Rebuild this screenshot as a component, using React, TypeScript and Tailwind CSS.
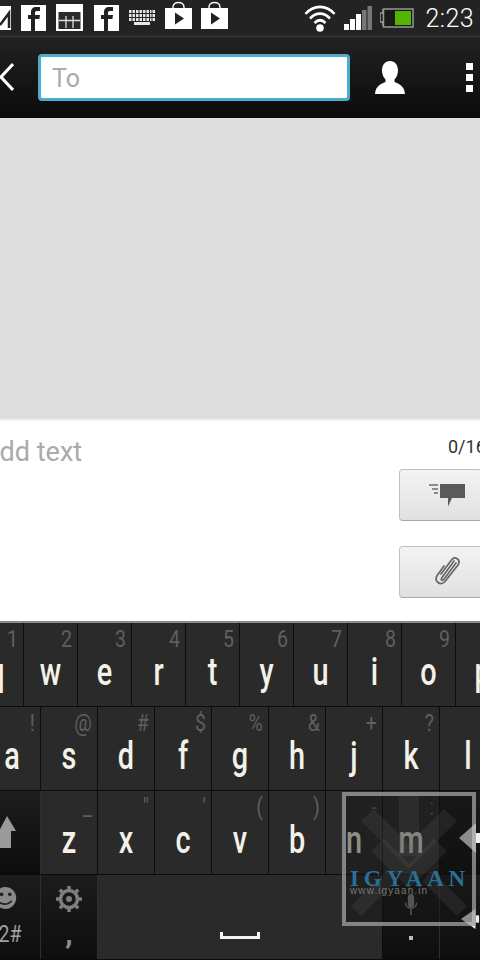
import type { ReactNode } from 'react'

const font = 'font-[Roboto,"Liberation_Sans",sans-serif]'

const row1 = [
  ['q', '1'], ['w', '2'], ['e', '3'], ['r', '4'], ['t', '5'],
  ['y', '6'], ['u', '7'], ['i', '8'], ['o', '9'], ['p', '0'],
]
const row2 = [
  ['a', '!'], ['s', '@'], ['d', '#'], ['f', '$'], ['g', '%'],
  ['h', '&'], ['j', '+'], ['k', '?'], ['l', '/'],
]
const row3 = [
  ['z', '_'], ['x', '"'], ['c', "'"], ['v', '('], ['b', ')'], ['n', '-'], ['m', ':'],
]

function FbIcon() {
  return (
    <svg width="25" height="26" viewBox="0 0 25 26" className="shrink-0">
      <rect width="25" height="26" fill="#fff" />
      <path d="M10 26V14H7v-4h3V7c0-3 2-5 5-5h4v4h-3c-1 0-2 .5-2 2v2h5l-.6 4H14v12z" fill="#222" />
    </svg>
  )
}

function PlayBag() {
  return (
    <svg width="27" height="28" viewBox="0 0 27 28" className="shrink-0">
      <path d="M8 8V6c0-6 11-6 11 0v2" fill="none" stroke="#fff" strokeWidth="1.4" />
      <rect y="7" width="27" height="21" fill="#fff" />
      <path d="M10 11.5l9 6-9 6z" fill="#222" />
    </svg>
  )
}

function StatusBar() {
  return (
    <div className="h-[37px] bg-[#232323] border-b border-[#3a3a3a] flex items-center relative shrink-0">
      <div className="flex items-center h-full w-[240px] -ml-[13px] pb-[1px]">
        <svg width="24" height="24" viewBox="0 0 24 24" className="shrink-0 mr-[10px]">
          <rect width="24" height="24" fill="#fff" />
          <path d="M13 19L22 7v15" fill="none" stroke="#222" strokeWidth="2.500" />
        </svg>
        <FbIcon />
        <svg width="27" height="27" viewBox="0 0 27 27" className="shrink-0 ml-[10px]">
          <rect width="27" height="27" fill="#fff" />
          <rect x="2.5" y="8" width="22" height="17" fill="#2a2a2a" />
          <path d="M3 16.500h21M10 12v12M17 12v12" stroke="#ddd" strokeWidth="1.300" />
        </svg>
        <div className="ml-[11px]"><FbIcon /></div>
        <svg width="26" height="15" viewBox="0 0 26 15" className="shrink-0 ml-[10px]">
          <g fill="#e6e6e6">
            <rect width="26" height="3" />
            <rect y="4" width="26" height="3" />
            <rect y="8" width="26" height="3" />
            <rect x="5" y="12" width="16" height="3" />
          </g>
          <path d="M3 0v11M6.500 0v11M10 0v11M13.500 0v11M17 0v11M20.500 0v11M23 0v11" stroke="#232323" strokeWidth="1" />
        </svg>
        <div className="ml-[10px] -mt-[5px]"><PlayBag /></div>
        <div className="ml-[9px] -mt-[5px]"><PlayBag /></div>
      </div>
      <div className="ml-auto flex items-center h-full -mr-[20px] shrink-0">
        <svg width="32" height="28" viewBox="0 0 32 28" className="shrink-0">
          <g fill="none" stroke="#fff" strokeWidth="2.600">
            <path d="M1.500 10c8-9.500 21-9.500 29 0" />
            <path d="M6 14.500c6-6.500 14-6.500 20 0" />
            <path d="M10.500 19c3.500-3.500 7.500-3.500 11 0" />
          </g>
          <circle cx="16" cy="24" r="3.800" fill="#fff" />
        </svg>
        <svg width="28" height="24" viewBox="0 0 28 24" className="shrink-0 ml-[8px]">
          <rect x="0" y="18" width="5" height="6" fill="#fff" />
          <rect x="6" y="13" width="5" height="11" fill="#fff" />
          <rect x="12" y="8" width="5" height="16" fill="#fff" />
          <rect x="18" y="4" width="4.500" height="20" fill="#777" />
          <rect x="23.500" y="0" width="4.500" height="24" fill="#777" />
        </svg>
        <svg width="34" height="20" viewBox="0 0 34 20" className="shrink-0 ml-[8px]">
          <path d="M0 5h3V2h1M0 5v9h3v4" fill="none" stroke="#999" strokeWidth="1.500" />
          <rect x="3.500" y="1" width="29.500" height="18" fill="#1a1a1a" stroke="#999" strokeWidth="1.500" />
          <rect x="15" y="3" width="16" height="14" fill="#54b500" />
        </svg>
        <span className={`${font} text-[25px] font-light text-white ml-[12px] leading-none tracking-[0.4px]`}>2:23</span>
        <span className={`${font} text-[14px] text-white ml-[6px] w-[20px] leading-none mt-[5px]`}>PM</span>
      </div>
    </div>
  )
}

function ActionBar() {
  return (
    <div className="h-[81px] bg-gradient-to-b from-[#222222] to-[#0b0b0b] flex items-center shrink-0">
      <svg width="14" height="30" viewBox="0 0 14 30" className="shrink-0 -mt-[1px]">
        <path d="M13 2L1 15l12 13" fill="none" stroke="#fff" strokeWidth="3" />
      </svg>
      <div className="ml-[24px] w-[312px] h-[47px] bg-white border-[3px] border-[#4dabcc] rounded-[4px] flex items-center pl-[11px] pt-[2px] -mt-[1px] shrink-0">
        <span className={`${font} text-[25px] text-[#aaaaaa] leading-none`}>To</span>
      </div>
      <svg width="30" height="33" viewBox="0 0 30 33" className="shrink-0 ml-[25px]">
        <path d="M15 0c5 0 8 4 8 9.500 0 4-1.500 7-3.500 9v2.500c3 1.500 10 3 10.500 12H0c.5-9 7.500-10.500 10.500-12v-2.500C8.500 16.500 7 13.500 7 9.500 7 4 10 0 15 0z" fill="#fff" />
      </svg>
      <div className="ml-[61px] flex flex-col gap-[4px] shrink-0">
        <div className="w-[7px] h-[7px] bg-white" />
        <div className="w-[7px] h-[7px] bg-white" />
        <div className="w-[7px] h-[7px] bg-white" />
      </div>
    </div>
  )
}

function Compose() {
  return (
    <div className="h-[200px] bg-white flex shrink-0 relative">
      <span className={`${font} text-[27px] text-[#aaaaaa] leading-none -ml-[18px] mt-[18px] whitespace-nowrap`}>Add text</span>
      <div className="ml-auto w-[82px] -mr-[1px] flex flex-col shrink-0">
        <span className={`${font} text-[18px] text-[#333333] leading-none mt-[17px] ml-[49px] whitespace-nowrap`}>0/160</span>
        <button className="mt-[13px] h-[52px] w-[83px] rounded-[4px] border border-[#c0c0c0] border-b-[#a8a8a8] bg-gradient-to-b from-[#f3f3f3] to-[#e1e1e1] flex items-center justify-center pl-[14px]">
          <svg width="37" height="23" viewBox="0 0 37 23">
            <path d="M11 0h25v14H23l-4 8.500V14h-8z" fill="#5a5a5a" />
            <path d="M0 1h9M3 5h6M5 9h4" stroke="#6a6a6a" strokeWidth="1.500" />
          </svg>
        </button>
        <button className="mt-[25px] h-[52px] w-[83px] rounded-[4px] border border-[#c0c0c0] border-b-[#a8a8a8] bg-gradient-to-b from-[#f3f3f3] to-[#e1e1e1] flex items-center justify-center pl-[14px]">
          <svg width="28" height="30" viewBox="0 0 28 30">
            <g fill="none" stroke="#666" strokeWidth="1.700" strokeLinecap="round">
              <path d="M10 9L3.500 18c-2 3-1.500 6 .5 7.500s5 1.500 7-1L24 8c1.500-2.500 1.500-4.500-.5-6s-4.500-1-6 1L7 17" />
              <path d="M20 4L8 20.500c-1 1.500-1 2-.3 2.500s1.500.3 2.500-1L22 6" />
            </g>
          </svg>
        </button>
      </div>
    </div>
  )
}

function Key({ letter, hint, width, dark }: { letter?: ReactNode; hint?: string; width: string; dark?: boolean }) {
  return (
    <div className={`${width} h-full shrink-0 border-r border-[#0c0c0c] flex flex-col ${dark ? 'bg-gradient-to-b from-[#1c1c1c] to-[#0e0e0e]' : 'bg-[#2a2a2a]'}`}>
      {hint ? (
        <span className={`${font} text-[23px] leading-[24px] text-[#5f5f5f] text-right pr-[6px] mt-[5px] h-[24px] origin-right scale-x-[0.85]`}>{hint}</span>
      ) : (
        <span className="h-[24px] mt-[5px]" />
      )}
      <span className={`${font} text-[39px] font-medium leading-[40px] text-[#f3f1e8] text-center scale-x-[0.74]`}>{letter}</span>
    </div>
  )
}

function Keyboard() {
  return (
    <div className="flex-1 bg-[#0c0c0c] border-t-[2px] border-[#8a8a8a] relative overflow-hidden">
      <div className="flex h-[84px] -ml-[30px] border-b-[1px] border-[#0c0c0c]">
        {row1.map(([l, h]) => <Key key={l} letter={l} hint={h} width="w-[54px]" />)}
      </div>
      <div className="flex h-[84px] -ml-[16px] border-b-[1px] border-[#0c0c0c]">
        {row2.map(([l, h]) => <Key key={l} letter={l} hint={h} width="w-[57px]" />)}
      </div>
      <div className="flex h-[84px] border-b-[1px] border-[#0c0c0c]">
        <div className="w-[41px] shrink-0 h-full border-r border-[#2f2f2f] bg-gradient-to-b from-[#1e1e1e] to-[#0c0c0c] flex items-center">
          <svg width="16" height="32" viewBox="0 0 16 32" className="-mt-[2px]">
            <path d="M-1 15L7 0l9 15h-5v17H0V15z" fill="#9a9a9a" />
          </svg>
        </div>
        {row3.map(([l, h]) => <Key key={l} letter={l} hint={h} width="w-[57px]" />)}
        <div className="flex-1 h-full bg-gradient-to-b from-[#1c1c1c] to-[#0e0e0e] flex items-center pl-[19px]">
          <svg width="22" height="30" viewBox="0 0 22 30" className="shrink-0 mt-[10px]">
            <path d="M0 15L17 0v30z" fill="#eeeeee" />
            <rect x="17" y="10" width="5" height="10" fill="#eeeeee" />
          </svg>
        </div>
      </div>
      <div className="flex h-[84px]">
        <div className="w-[41px] shrink-0 h-full border-r border-[#2f2f2f] bg-gradient-to-b from-[#1c1c1c] to-[#0e0e0e] flex flex-col">
          <svg width="20" height="24" viewBox="0 0 22 24" className="mt-[11px] -ml-[2px]">
            <circle cx="8" cy="12" r="12" fill="#8a8a8a" />
            <circle cx="4" cy="8" r="2" fill="#222" />
            <circle cx="13" cy="8" r="2" fill="#222" />
            <path d="M0 15c3 5 11 5 15 0" fill="none" stroke="#222" strokeWidth="1.800" />
          </svg>
          <span className={`${font} text-[23px] leading-none text-[#a0a0a0] mt-[13px] -ml-[35px] w-[70px] text-center scale-x-[0.85] whitespace-nowrap`}>?12#</span>
        </div>
        <div className="w-[57px] shrink-0 h-full border-r border-[#2f2f2f] bg-gradient-to-b from-[#1c1c1c] to-[#0e0e0e] flex flex-col items-center">
          <svg width="26" height="26" viewBox="0 0 26 26" className="mt-[11px]">
            <circle cx="13" cy="13" r="8.500" fill="none" stroke="#7e7e7e" strokeWidth="3.500" />
            <circle cx="13" cy="13" r="3" fill="#7e7e7e" />
            <path d="M13 0v5M13 21v5M0 13h5M21 13h5M3.800 3.800l3.500 3.500M18.700 18.700l3.500 3.500M22.200 3.800l-3.500 3.500M7.300 18.700l-3.500 3.500" stroke="#7e7e7e" strokeWidth="3.500" />
          </svg>
          <span className={`${font} text-[30px] font-bold leading-none text-[#8f8f8f] mt-[7px]`}>,</span>
        </div>
        <div className="w-[285px] shrink-0 h-full border-r border-[#0c0c0c] bg-[#2a2a2a] flex items-start justify-center pt-[57px]">
          <div className="w-[40px] h-[7px] border-[3px] border-t-0 border-[#f3f3f3]" />
        </div>
        <div className="w-[57px] shrink-0 h-full border-r border-[#2f2f2f] bg-gradient-to-b from-[#1c1c1c] to-[#0e0e0e] flex flex-col items-center">
          <svg width="18" height="22" viewBox="0 0 18 28" className="mt-[19px]">
            <rect x="5" y="0" width="8" height="17" rx="4" fill="#8a8a8a" />
            <path d="M2 11c0 9 14 9 14 0M9 18v9" fill="none" stroke="#8a8a8a" strokeWidth="2" />
          </svg>
          <div className="w-[4px] h-[4px] bg-[#bbbbbb] mt-[20px]" />
        </div>
        <div className="flex-1 h-full bg-gradient-to-b from-[#1c1c1c] to-[#0e0e0e] flex items-start pl-[20px] pt-[34px]">
          <svg width="20" height="20" viewBox="0 0 20 22" className="shrink-0">
            <path d="M0 11L16 0v22z" fill="#eeeeee" />
            <rect x="16" y="7" width="4" height="8" fill="#eeeeee" />
          </svg>
        </div>
      </div>

      {/* Watermark over the keys */}
      <div className="absolute left-[342px] top-[169px] w-[134px] h-[134px] border-[4px] border-[#c8c8c8]/60 bg-[#141414]/45 overflow-hidden">
        <svg width="126" height="126" viewBox="0 0 126 126" className="absolute left-0 top-0">
          <g fill="#666" fillOpacity="0.18">
            <path d="M15 25l13-12 35 35 35-35 13 12-48 48z" />
            <path d="M25 55l13-12 25 25 25-25 13 12-38 38z" />
            <rect x="53" y="0" width="20" height="60" />
            <path d="M5 110l35-35 10 10-35 35zM121 110L86 75 76 85l35 35z" />
          </g>
        </svg>
        <div className="absolute left-[4px] top-[71px] text-[#2b6f97] font-['Liberation_Serif',serif] font-bold text-[23px] leading-none tracking-[4.800px] whitespace-nowrap">IGYAAN</div>
        <div className="absolute left-[4px] top-[90px] text-[#777777] font-['Liberation_Sans',sans-serif] text-[10px] leading-none tracking-[1.100px] whitespace-nowrap">www.igyaan.in</div>
      </div>
    </div>
  )
}

export default function App() {
  return (
    <div className="w-[480px] h-[960px] overflow-hidden flex flex-col bg-black">
      <StatusBar />
      <ActionBar />
      <div className="h-[303px] bg-[#dedede] border-b-[2px] border-[#f2f2f2] shrink-0" />
      <Compose />
      <Keyboard />
    </div>
  )
}
